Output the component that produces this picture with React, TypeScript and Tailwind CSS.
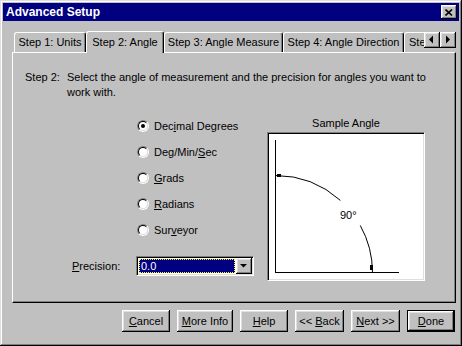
import React from "react";

const raised =
  "shadow-[inset_-1px_-1px_#000,inset_1px_1px_#fff,inset_-2px_-2px_#808080,inset_2px_2px_#dfdfdf]";

function U({ children }: { children: React.ReactNode }) {
  return <span className="underline underline-offset-[1px]">{children}</span>;
}

function Tab({ label, w, active }: { label: string; w: string; active?: boolean }) {
  if (active) {
    return (
      <div
        className={`${w} relative z-10 -mb-px h-[23px] shrink-0 rounded-t-[3px] border-t border-l border-r border-t-white border-l-white border-r-black bg-[#c0c0c0] pt-[3px] text-center shadow-[inset_-1px_0_#808080] whitespace-nowrap`}
      >
        {label}
      </div>
    );
  }
  return (
    <div
      className={`${w} mb-px h-[20px] shrink-0 rounded-t-[3px] border-t border-l border-r border-t-white border-l-white border-r-black bg-[#c0c0c0] pt-[2px] text-center shadow-[inset_-1px_0_#808080] whitespace-nowrap`}
    >
      {label}
    </div>
  );
}

function Radio({ checked, children }: { checked?: boolean; children: React.ReactNode }) {
  return (
    <div className="flex h-[26px] items-center pl-[65px]">
      <span className="flex h-[12px] w-[12px] items-center justify-center rounded-full border border-t-[#808080] border-l-[#808080] border-b-white border-r-white">
        <span className="flex h-[10px] w-[10px] items-center justify-center rounded-full border border-t-black border-l-black border-b-[#dfdfdf] border-r-[#dfdfdf] bg-white">
          {checked && <span className="h-[4px] w-[4px] rounded-full bg-black" />}
        </span>
      </span>
      <span className="ml-[5px]">{children}</span>
    </div>
  );
}

function Btn({ w, def, children }: { w: string; def?: boolean; children: React.ReactNode }) {
  if (def) {
    return (
      <div className={`${w} h-[22px] border border-black`}>
        <div className={`flex h-full w-full items-center justify-center ${raised}`}>
          <span className="whitespace-pre">{children}</span>
        </div>
      </div>
    );
  }
  return (
    <div className={`${w} flex h-[22px] items-center justify-center ${raised}`}>
      <span className="whitespace-pre">{children}</span>
    </div>
  );
}

export default function App() {
  return (
    <div
      className="h-[346px] w-[462px] bg-[#c0c0c0] p-[3px] text-[11px] leading-[14px] text-black shadow-[inset_-1px_-1px_#000,inset_1px_1px_#dfdfdf,inset_-2px_-2px_#808080,inset_2px_2px_#fff]"
      style={{ fontFamily: '"Liberation Sans", Arial, sans-serif' }}
    >
      {/* Title bar */}
      <div className="flex h-[18px] items-center justify-between bg-[#000080] pl-[3px] pr-[2px]">
        <span className="text-[12px] font-bold text-white">Advanced Setup</span>
        <div className={`flex h-[14px] w-[16px] items-center justify-center bg-[#c0c0c0] ${raised}`}>
          <svg width="8" height="7" viewBox="0 0 8 7">
            <path d="M0.5 0.5 L7 6.5 M7 0.5 L0.5 6.5" stroke="#000" strokeWidth="1.6" />
          </svg>
        </div>
      </div>

      <div className="pl-[9px] pr-[3px] pt-[9px]">
        {/* Tabs */}
        <div className="relative">
          <div className="relative z-10 -mb-px flex h-[23px] items-end overflow-hidden pl-[2px]">
            <Tab label="Step 1: Units" w="w-[72px]" />
            <Tab label="Step 2: Angle" w="w-[78px]" active />
            <Tab label="Step 3: Angle Measure" w="w-[119px]" />
            <Tab label="Step 4: Angle Direction" w="w-[121px]" />
            <div className="mb-px h-[20px] w-[40px] shrink-0 rounded-t-[3px] border-t border-l border-t-white border-l-white bg-[#c0c0c0] pl-[4px] pt-[2px]">
              Ste
            </div>
          </div>
          <div className="absolute right-[0px] top-[2px] z-20 flex">
            <div className={`flex h-[16px] w-[16px] items-center justify-center bg-[#c0c0c0] ${raised}`}>
              <svg width="16" height="16" viewBox="0 0 16 16">
                <polygon points="5,7.5 9,3.5 9,11.5" fill="#000" />
              </svg>
            </div>
            <div className={`flex h-[16px] w-[16px] items-center justify-center bg-[#c0c0c0] ${raised}`}>
              <svg width="16" height="16" viewBox="0 0 16 16">
                <polygon points="6,3.5 10,7.5 6,11.5" fill="#000" />
              </svg>
            </div>
          </div>
        </div>

        {/* Panel */}
        <div className="h-[251px] border border-t-white border-l-white border-r-black border-b-black shadow-[inset_-1px_-1px_#808080]">
          <div className="flex pl-[12px] pt-[17px] leading-[15px]">
            <span className="w-[42px] shrink-0">Step 2:</span>
            <span className="whitespace-nowrap">
              Select the angle of measurement and the precision for angles you want to
              <br />
              work with.
            </span>
          </div>

          <div className="mt-[13px] flex pl-[59px]">
            <div className="w-[182px]">
              <Radio checked>
                Dec<U>i</U>mal Degrees
              </Radio>
              <Radio>
                Deg/Min/<U>S</U>ec
              </Radio>
              <Radio>
                <U>G</U>rads
              </Radio>
              <Radio>
                <U>R</U>adians
              </Radio>
              <Radio>
                Sur<U>v</U>eyor
              </Radio>
              <div className="mt-[13px] flex items-center">
                <span className="w-[64px]">
                  <U>P</U>recision:
                </span>
                <div className="flex h-[20px] w-[118px] border border-t-[#808080] border-l-[#808080] border-b-white border-r-white bg-white p-px shadow-[inset_1px_1px_#000,inset_-1px_-1px_#dfdfdf]">
                  <div className="m-px flex flex-1 items-center border border-dotted border-[#ffff00] bg-[#000080] pl-[1px] text-white">
                    0.0
                  </div>
                  <div className={`flex h-[16px] w-[16px] items-center justify-center bg-[#c0c0c0] ${raised}`}>
                    <svg width="16" height="16" viewBox="0 0 16 16">
                      <polygon points="4,6 11,6 7.5,9.5" fill="#000" />
                    </svg>
                  </div>
                </div>
              </div>
            </div>

            <div className="ml-[13px] pt-[3px]">
              <div className="w-[158px] text-center">Sample Angle</div>
              <div className="mt-[2px] h-[149px] w-[158px] border border-t-[#808080] border-l-[#808080] border-b-white border-r-white bg-white shadow-[inset_1px_1px_#000,inset_-1px_-1px_#dfdfdf]">
                <svg width="156" height="147" viewBox="0 0 156 147">
                  <line x1="7.5" y1="7" x2="7.5" y2="140" stroke="#000" strokeWidth="1" />
                  <line x1="7" y1="139.5" x2="131" y2="139.5" stroke="#000" strokeWidth="1" />
                  <path d="M7.5 42.5 A97 97 0 0 1 72.4 67.4" fill="none" stroke="#000" strokeWidth="1" />
                  <path d="M92.3 92.5 A97 97 0 0 1 104.5 139.5" fill="none" stroke="#000" strokeWidth="1" />
                  <rect x="9" y="41" width="4" height="3" fill="#000" />
                  <rect x="102" y="132" width="3" height="5" fill="#000" />
                  <text x="72" y="86" fontSize="11" fontFamily='"Liberation Sans", Arial, sans-serif' fill="#000">
                    90°
                  </text>
                </svg>
              </div>
            </div>
          </div>
        </div>
      </div>

      {/* Buttons */}
      <div className="mt-[7px] flex justify-end gap-[7px] pr-[4px]">
        <Btn w="w-[48px]">
          <U>C</U>ancel
        </Btn>
        <Btn w="w-[56px]">
          <U>M</U>ore Info
        </Btn>
        <Btn w="w-[48px]">
          <U>H</U>elp
        </Btn>
        <Btn w="w-[49px]">
          {"<< "}
          <U>B</U>ack
        </Btn>
        <Btn w="w-[49px]">
          <U>N</U>ext{" >>"}
        </Btn>
        <Btn w="w-[48px]" def>
          <U>D</U>one
        </Btn>
      </div>
    </div>
  );
}
